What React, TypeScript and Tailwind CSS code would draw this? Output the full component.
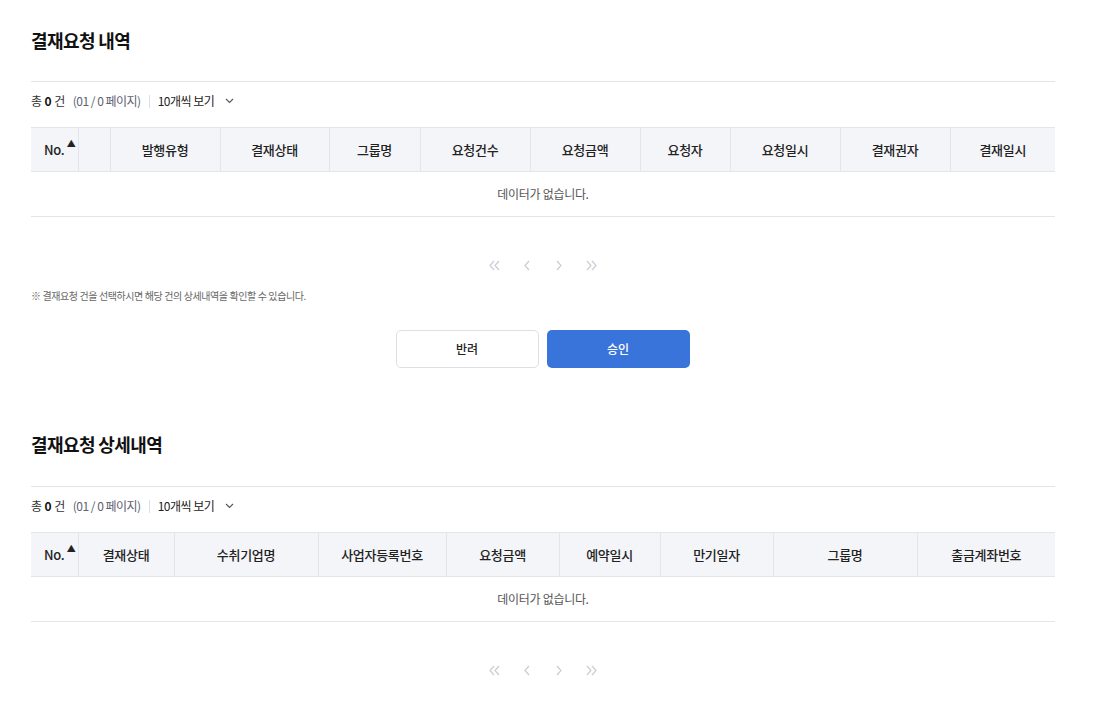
import React from 'react';

const font = { fontFamily: '"Noto Sans CJK KR", "Noto Sans", sans-serif' };

const cols1: { label: string; w: number }[] = [
    { label: 'No.', w: 47 },
    { label: '', w: 32 },
    { label: '발행유형', w: 110 },
    { label: '결재상태', w: 109 },
    { label: '그룹명', w: 91 },
    { label: '요청건수', w: 110 },
    { label: '요청금액', w: 110 },
    { label: '요청자', w: 90 },
    { label: '요청일시', w: 110 },
    { label: '결재권자', w: 110 },
    { label: '결재일시', w: 105 },
];

const cols2: { label: string; w: number }[] = [
    { label: 'No.', w: 47 },
    { label: '결재상태', w: 96 },
    { label: '수취기업명', w: 144 },
    { label: '사업자등록번호', w: 128 },
    { label: '요청금액', w: 113 },
    { label: '예약일시', w: 101 },
    { label: '만기일자', w: 113 },
    { label: '그룹명', w: 144 },
    { label: '출금계좌번호', w: 138 },
];

function Chevron({ dir, double }: { dir: 'left' | 'right'; double?: boolean }) {
    if (double) {
        return (
            <svg width="14" height="13" viewBox="0 0 14 13" fill="none" stroke="#c9ccd6" strokeWidth="1.2">
                <path d={dir === 'left' ? 'M6 2 L2 6.5 L6 11' : 'M3 2 L7 6.5 L3 11'} />
                <path d={dir === 'left' ? 'M11 2 L7 6.5 L11 11' : 'M8 2 L12 6.5 L8 11'} />
            </svg>
        );
    }
    return (
        <svg width="14" height="13" viewBox="0 0 14 13" fill="none" stroke="#c9ccd6" strokeWidth="1.2">
            <path d={dir === 'left' ? 'M9 2 L5 6.5 L9 11' : 'M5 2 L9 6.5 L5 11'} />
        </svg>
    );
}

function Pagination() {
    return (
        <div className="flex items-center justify-center gap-[18px] h-6">
            <Chevron dir="left" double />
            <Chevron dir="left" />
            <Chevron dir="right" />
            <Chevron dir="right" double />
        </div>
    );
}

function CountRow() {
    return (
        <div className="h-[38px] flex items-center text-[12px] tracking-[-0.5px]">
            <span className="text-[#333]">총</span>
            <span className="ml-[3px] font-bold text-[#111]">0</span>
            <span className="ml-[3px] text-[#333]">건</span>
            <span className="ml-[8px] text-[#5b6170]">(01 / 0 페이지)</span>
            <span className="mx-[8px] h-[13px] w-px bg-[#dcdfe5]" />
            <span className="text-[#222]">10개씩 보기</span>
            <svg className="ml-[11px]" width="9" height="6" viewBox="0 0 9 6" fill="none" stroke="#555" strokeWidth="1.1">
                <path d="M1 1 L4.5 4.5 L8 1" />
            </svg>
        </div>
    );
}

function DataTable({ cols }: { cols: { label: string; w: number }[] }) {
    return (
        <table className="w-[1024px] table-fixed border-collapse mt-[7px]">
            <colgroup>
                {cols.map((c, i) => (
                    <col key={i} style={{ width: c.w }} />
                ))}
            </colgroup>
            <thead>
                <tr className="h-[44px] bg-[#f4f5f9] border-t border-b border-[#e3e5ea]">
                    {cols.map((c, i) => (
                        <th
                            key={i}
                            className={`text-[13px] font-medium text-[#222] tracking-[-0.3px] ${i > 0 ? 'border-l border-[#e3e5ea]' : ''}`}
                        >
                            {c.label === 'No.' ? (
                                <span className="relative">
                                    No.
                                    <span className="absolute -right-[11px] -top-[3px] text-[9px]">▲</span>
                                </span>
                            ) : (
                                c.label
                            )}
                        </th>
                    ))}
                </tr>
            </thead>
            <tbody>
                <tr className="h-[45px] border-b border-[#e3e5ea]">
                    <td colSpan={cols.length} className="text-center text-[12px] text-[#555] tracking-[-0.3px]">
                        데이터가 없습니다.
                    </td>
                </tr>
            </tbody>
        </table>
    );
}

export default function App() {
    return (
        <div className="w-[1108px] h-[702px] overflow-hidden bg-white pl-[31px]" style={font}>
            {/* 결재요청 내역 */}
            <h2 className="pt-[27px] h-[81px] text-[18px] leading-[26px] font-bold text-[#111] tracking-[-0.6px]">
                결재요청 내역
            </h2>
            <div className="w-[1024px] border-t border-[#e3e5ea]" />
            <CountRow />
            <DataTable cols={cols1} />
            <div className="mt-[36px] w-[1024px]">
                <Pagination />
            </div>
            <p className="mt-[12px] text-[10px] leading-[14px] text-[#666] tracking-[-0.4px]">
                ※ 결재요청 건을 선택하시면 해당 건의 상세내역을 확인할 수 있습니다.
            </p>
            <div className="w-[1024px] flex justify-center gap-[8px] mt-[27px] pr-[1px]">
                <button className="w-[143px] h-[38px] rounded-[5px] border border-[#dcdfe5] bg-white text-[12px] font-medium text-[#222]">
                    반려
                </button>
                <button className="w-[143px] h-[38px] rounded-[5px] bg-[#3874da] text-[12px] font-medium text-white">
                    승인
                </button>
            </div>

            {/* 결재요청 상세내역 */}
            <h2 className="pt-[63px] h-[118px] text-[18px] leading-[26px] font-bold text-[#111] tracking-[-0.6px]">
                결재요청 상세내역
            </h2>
            <div className="w-[1024px] border-t border-[#e3e5ea]" />
            <CountRow />
            <DataTable cols={cols2} />
            <div className="mt-[36px] w-[1024px]">
                <Pagination />
            </div>
        </div>
    );
}
